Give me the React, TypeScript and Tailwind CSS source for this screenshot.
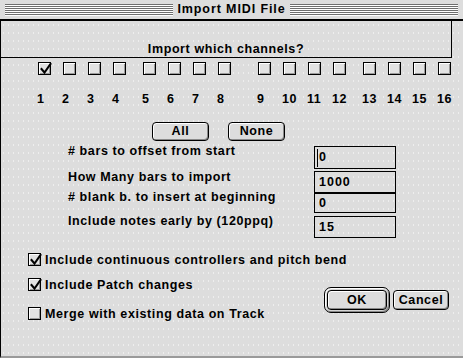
import React from "react";

const font = { fontFamily: '"Liberation Sans", Arial, sans-serif' };

function Box({ checked = false }: { checked?: boolean }) {
  return (
    <div className="relative w-[13px] h-[13px] border border-black bg-[#e2e2e2] shadow-[inset_1px_1px_0_#fff,inset_-1px_-1px_0_#9a9a9a] shrink-0">
      {checked && (
        <svg className="absolute left-[-1px] top-[-2px]" width="15" height="15" viewBox="0 0 15 15">
          <path d="M3.5 8 L6.5 11.5 L12.5 3" stroke="#000" strokeWidth="2" fill="none" strokeLinecap="square" />
        </svg>
      )}
    </div>
  );
}

function Btn({ label, w }: { label: string; w: string }) {
  return (
    <div
      className={`${w} h-[19px] rounded-[4px] border border-black bg-[#dddddd] shadow-[inset_1px_1px_0_#fff,inset_-1px_-1px_0_#8a8a8a] flex items-center justify-center text-[12.5px] font-bold leading-none tracking-[0.6px] shrink-0`}
    >
      {label}
    </div>
  );
}

function Field({ value, h, cursor = false }: { value: string; h: string; cursor?: boolean }) {
  return (
    <div className={`w-[82px] ${h} border border-black flex items-center ${cursor ? "pl-[2px]" : "pl-[4px]"}`}>
      {cursor && <span className="w-[1px] h-[18px] bg-black mr-[1px]" />}
      <span className="text-[12.5px] font-bold tracking-[1px] leading-none">{value}</span>
    </div>
  );
}

const groups = [
  [1, 2, 3, 4],
  [5, 6, 7, 8],
  [9, 10, 11, 12],
  [13, 14, 15, 16],
];
const groupMl = ["ml-0", "ml-[5px]", "ml-[15px]", "ml-[5px]"];

export default function App() {
  return (
    <div className="w-[463px] h-[358px] overflow-hidden bg-[#dddddd] text-black" style={font}>
      {/* Title bar */}
      <div className="h-[21px] border-b-2 border-black flex items-center px-[5px] gap-[3px]">
        <div className="flex-1 h-[12px] bg-[repeating-linear-gradient(to_bottom,#6e6e6e_0px,#6e6e6e_1px,#ffffff_1px,#ffffff_2px)]" />
        <div className="text-[12.5px] font-bold leading-none tracking-[0.9px] px-[1px]">Import MIDI File</div>
        <div className="flex-1 h-[12px] bg-[repeating-linear-gradient(to_bottom,#6e6e6e_0px,#6e6e6e_1px,#ffffff_1px,#ffffff_2px)]" />
      </div>

      {/* Content */}
      <div className="h-[337px] border-l border-black border-b-2 border-b-[#9a9a9a] bg-[radial-gradient(circle,#eeeeee_0.7px,transparent_1px)] bg-[length:5px_8px]">
        {/* header */}
        <div className="w-[451px] h-[37px] border-r border-b border-black pt-[21px] text-center text-[12.5px] font-bold leading-[14px] tracking-[0.6px]">
          Import which channels?
        </div>

        {/* channels */}
        <div className="flex mt-[4px] pl-[37px]">
          {groups.map((g, gi) => (
            <div key={gi} className={`flex ${groupMl[gi]}`}>
              {g.map((n) => (
                <div key={n} className="w-[25px] flex flex-col items-start">
                  <Box checked={n === 1} />
                  <div className="mt-[17px] text-[12.5px] font-bold leading-[14px] tracking-[0.6px] ml-[-1px]">{n}</div>
                </div>
              ))}
            </div>
          ))}
        </div>

        {/* All / None */}
        <div className="flex mt-[16px] pl-[151px] gap-[19px]">
          <Btn label="All" w="w-[57px]" />
          <Btn label="None" w="w-[57px]" />
        </div>

        {/* form rows */}
        <div className="flex flex-col mt-[5px] pl-[67px] text-[12.5px] font-bold tracking-[0.6px]">
          <div className="flex items-start">
            <div className="w-[246px] leading-[14px] mt-[-2px] whitespace-nowrap"># bars to offset from start</div>
            <Field value="0" h="h-[23px]" cursor />
          </div>
          <div className="flex items-start mt-[2px]">
            <div className="w-[246px] leading-[14px] mt-[-1px] whitespace-nowrap">How Many bars to import</div>
            <Field value="1000" h="h-[22px]" />
          </div>
          <div className="flex items-start">
            <div className="w-[246px] leading-[14px] mt-[-3px] whitespace-nowrap"># blank b. to insert at beginning</div>
            <Field value="0" h="h-[20px]" />
          </div>
          <div className="flex items-start mt-[3px]">
            <div className="w-[246px] leading-[14px] mt-[-2px] whitespace-nowrap">Include notes early by (120ppq)</div>
            <Field value="15" h="h-[22px]" />
          </div>
        </div>

        {/* bottom */}
        <div className="flex flex-col mt-[15px] text-[12.5px] font-bold tracking-[0.6px]">
          <div className="flex items-center gap-[4px] h-[13px] pl-[27px]">
            <Box checked />
            <span className="leading-[14px] whitespace-nowrap">Include continuous controllers and pitch bend</span>
          </div>
          <div className="flex mt-[12px]">
            <div className="flex flex-col pl-[27px]">
              <div className="flex items-center gap-[4px] h-[13px]">
                <Box checked />
                <span className="leading-[14px] whitespace-nowrap">Include Patch changes</span>
              </div>
              <div className="flex items-center gap-[4px] h-[13px] mt-[16px]">
                <Box />
                <span className="leading-[14px] whitespace-nowrap">Merge with existing data on Track</span>
              </div>
            </div>
            <div className="ml-auto pr-[14px] mt-[9px] flex items-center gap-[3px] h-[26px]">
              <div className="w-[66px] h-[26px] rounded-[7px] border border-black bg-[#d4d4d4] shadow-[inset_1px_1px_0_#fff,inset_-1px_-1px_0_#888] p-[2px]">
                <div className="w-full h-full rounded-[4px] border border-black bg-[#dddddd] shadow-[inset_1px_1px_0_#fff,inset_-1px_-1px_0_#8a8a8a] flex items-center justify-center leading-none">
                  OK
                </div>
              </div>
              <Btn label="Cancel" w="w-[56px] h-[20px]" />
            </div>
          </div>
        </div>
      </div>
    </div>
  );
}
